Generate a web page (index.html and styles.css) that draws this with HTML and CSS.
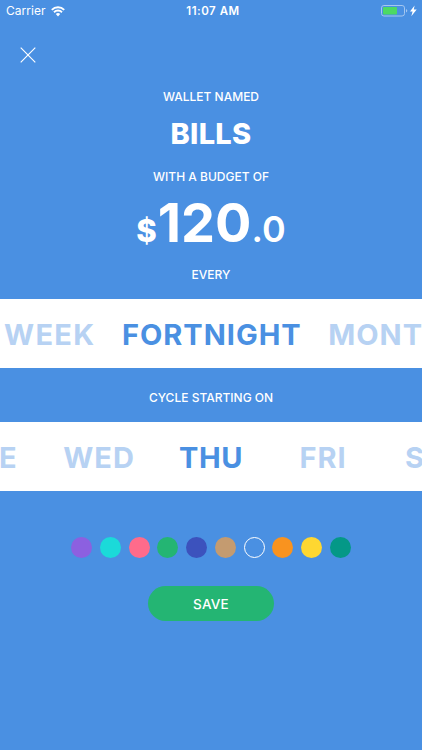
FILE: index.html
```
<!DOCTYPE html>
<html lang="en">
<head>
<meta charset="utf-8">
<meta name="viewport" content="width=device-width, initial-scale=1">
<title>Wallet</title>
<link rel="stylesheet" href="styles.css">
</head>
<body>

<header class="statusbar">
	<div class="carrier">
		<span>Carrier</span>
		<svg class="wifi" viewBox="0 0 14 11" width="14" height="11">
			<path d="M.8 3.8a8.8 8.8 0 0 1 12.4 0M3 6.2a5.7 5.7 0 0 1 8 0" fill="none" stroke="#fff" stroke-width="1.9"/>
			<path d="M4.8 8a3.2 3.2 0 0 1 4.4 0L7 10.4z" fill="#fff"/>
		</svg>
	</div>
	<time class="clock">11:07 AM</time>
	<div class="power">
		<svg viewBox="0 0 36 12" width="36" height="12">
			<rect x=".5" y=".5" width="23" height="10.5" rx="2.4" fill="none" stroke="#a5c7f0"/>
			<rect x="2" y="2" width="14" height="7.5" rx=".8" fill="#4cd964"/>
			<path d="M25 4v3.6q1.3-.5 1.3-1.8T25 4z" fill="#a5c7f0"/>
			<path d="M33.6.6 29 6.6h2.6l-1.3 4.6 5.4-6.6h-2.9z" fill="#fff"/>
		</svg>
	</div>
</header>

<button class="close" aria-label="Close">
	<svg viewBox="0 0 16 16" width="16" height="16">
		<path d="M.7.7l14.6 14.6M15.3.7L.7 15.3" stroke="#fff" stroke-width="1.15"/>
	</svg>
</button>

<main class="wallet">
	<p class="label label-name">Wallet named</p>
	<h1 class="name">BILLS</h1>
	<p class="label label-budget">With a budget of</p>
	<div class="amount">
		<span class="currency">$</span><span class="whole">120</span><span class="cents">.0</span>
	</div>
	<p class="label label-every">Every</p>

	<div class="picker periods">
		<span class="week">WEEK</span>
		<span class="fortnight selected">FORTNIGHT</span>
		<span class="month">MONTH</span>
	</div>

	<p class="label label-cycle">Cycle starting on</p>

	<div class="picker days">
		<span>TUE</span>
		<span>WED</span>
		<span class="selected">THU</span>
		<span>FRI</span>
		<span>SAT</span>
	</div>

	<div class="colors">
		<i class="dot purple"></i>
		<i class="dot aqua"></i>
		<i class="dot pink"></i>
		<i class="dot green"></i>
		<i class="dot indigo"></i>
		<i class="dot tan"></i>
		<i class="dot blue"></i>
		<i class="dot orange"></i>
		<i class="dot yellow"></i>
		<i class="dot teal"></i>
	</div>

	<button class="save">SAVE</button>
</main>

</body>
</html>
```
FILE: styles.css
```
:root {
	--blue  : #4a90e2;
	--faded : #b7d2f3;
	--green : #24b573;
}
* {
	box-sizing : border-box;
}
body {
	margin           : 0;
	height           : 750px;
	overflow         : hidden;
	background-color : var(--blue);
	color            : #fff;
	font-family      : Inter, "Liberation Sans", sans-serif;
}
button {
	border      : 0;
	color       : inherit;
	font-family : inherit;
}

/* status bar */
.statusbar {
	display               : grid;
	grid-template-columns : 1fr auto 1fr;
	align-items           : center;
	height                : 22px;
	padding               : 0 5px 0 6px;
	font-size             : 12px;
	line-height           : 22px;
}
.carrier {
	display        : flex;
	align-items    : center;
	gap            : 5px;
	letter-spacing : 0.05px;
}
.clock {
	padding-left   : 3px;
	font-size      : 11.5px;
	font-weight    : 600;
	letter-spacing : 0.5px;
}
.power {
	display         : flex;
	justify-content : flex-end;
}
.close {
	display    : block;
	width      : 56px;
	height     : 66px;
	padding    : 25px 20px;
	background : none;
}
.close svg {
	display : block;
}

/* wallet form */
.wallet {
	display        : flex;
	flex-direction : column;
	align-items    : center;
}
.label {
	margin         : 0;
	height         : 18px;
	line-height    : 18px;
	font-size      : 12px;
	font-weight    : 500;
	text-transform : uppercase;
	white-space    : nowrap;
}
.name {
	margin         : 9px 0 0;
	height         : 38px;
	line-height    : 38px;
	font-size      : 29px;
	font-weight    : 800;
	letter-spacing : 0.3px;
}
.label-budget {
	margin-top : 15px;
}
.amount {
	display     : flex;
	align-items : baseline;
	height      : 66px;
	margin-top  : 4px;
	line-height : 66px;
	font-weight : 700;
}
.currency {
	margin-right : 1px;
	font-size    : 31px;
	font-weight  : 800;
}
.whole {
	font-size : 54px;
}
.cents {
	font-size   : 36px;
	font-weight : 600;
}
.label-every {
	margin-top : 10px;
}
.picker {
	display          : flex;
	justify-content  : center;
	align-items      : center;
	width            : 100%;
	height           : 69px;
	padding-top      : 2px;
	overflow         : hidden;
	background-color : #fff;
	color            : var(--faded);
	font-size        : 29px;
	font-weight      : 700;
	letter-spacing   : 1px;
	white-space      : nowrap;
}
.picker .selected {
	color : var(--blue);
}
.periods {
	justify-content : flex-start;
	gap             : 26.5px;
	margin-top      : 15px;
	padding-left    : 4px;
}
.week {
	letter-spacing : 1.3px;
}
.label-cycle {
	margin-top : 21px;
}
.days {
	margin-top : 15px;
}
.days span {
	flex       : 0 0 112px;
	text-align : center;
}
.days .selected {
	letter-spacing : 0.6px;
}

/* wallet colors */
.colors {
	display    : flex;
	gap        : 7.8px;
	margin-top : 46px;
}
.dot {
	width         : 21px;
	height        : 21px;
	border-radius : 50%;
}
.purple { background-color : #8c60e0; }
.aqua   { background-color : #1bdad9; }
.pink   { background-color : #ff6b8b; }
.green  { background-color : #24b573; }
.indigo { background-color : #3c52bd; }
.tan    { background-color : #c49b70; }
.blue   { border : 1.3px solid #fff; }
.orange { background-color : #f9931f; }
.yellow { background-color : #fed731; }
.teal   { background-color : #049887; }

.save {
	width            : 126px;
	height           : 35px;
	margin-top       : 28px;
	padding          : 0;
	border-radius    : 18px;
	background-color : var(--green);
	font-size        : 13.5px;
	font-weight      : 500;
	letter-spacing   : 0.2px;
}
```
